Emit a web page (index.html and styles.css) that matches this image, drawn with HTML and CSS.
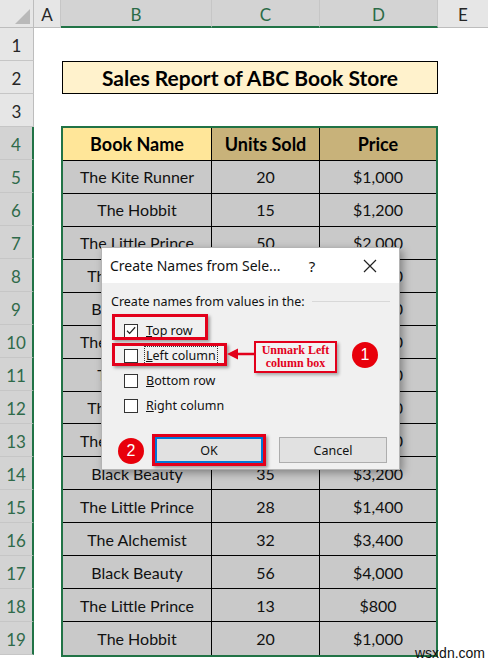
FILE: index.html
```html
<!DOCTYPE html>
<html>
<head>
<meta charset="utf-8">
<link rel="stylesheet" href="styles.css">
</head>
<body>
<div class="sheet">
  <div class="colheads">
    <div class="ch corner"><span class="tri"></span></div>
    <div class="ch ca">A</div>
    <div class="ch cb sel">B</div>
    <div class="ch cc sel">C</div>
    <div class="ch cd sel">D</div>
    <div class="ch ce">E</div>
  </div>
  <div class="body">
    <div class="rowheads">
      <div class="rh">1</div><div class="rh">2</div><div class="rh">3</div>
      <div class="rh sel">4</div><div class="rh sel">5</div><div class="rh sel">6</div>
      <div class="rh sel">7</div><div class="rh sel">8</div><div class="rh sel">9</div>
      <div class="rh sel">10</div><div class="rh sel">11</div><div class="rh sel">12</div>
      <div class="rh sel">13</div><div class="rh sel">14</div><div class="rh sel">15</div>
      <div class="rh sel">16</div><div class="rh sel">17</div><div class="rh sel">18</div>
      <div class="rh sel">19</div>
    </div>
    <div class="cells">
      <div class="title">Sales Report of ABC Book Store</div>
      <div class="tbl">
        <div class="c hd hd1">Book Name</div><div class="c hd hd2">Units Sold</div><div class="c hd hd2 last">Price</div>
        <div class="c">The Kite Runner</div><div class="c">20</div><div class="c last">$1,000</div>
        <div class="c">The Hobbit</div><div class="c">15</div><div class="c last">$1,200</div>
        <div class="c">The Little Prince</div><div class="c">50</div><div class="c last">$2,000</div>
        <div class="c">The Alchemist</div><div class="c">40</div><div class="c last">$3,000</div>
        <div class="c">Black Beauty</div><div class="c">25</div><div class="c last">$2,500</div>
        <div class="c">The Kite Runner</div><div class="c">30</div><div class="c last">$1,500</div>
        <div class="c">The Hobbit</div><div class="c">18</div><div class="c last">$1,800</div>
        <div class="c">The Alchemist</div><div class="c">22</div><div class="c last">$2,200</div>
        <div class="c">The Kite Runner</div><div class="c">45</div><div class="c last">$2,700</div>
        <div class="c">Black Beauty</div><div class="c">35</div><div class="c last">$3,200</div>
        <div class="c">The Little Prince</div><div class="c">28</div><div class="c last">$1,400</div>
        <div class="c">The Alchemist</div><div class="c">32</div><div class="c last">$3,400</div>
        <div class="c">Black Beauty</div><div class="c">56</div><div class="c last">$4,000</div>
        <div class="c">The Little Prince</div><div class="c">13</div><div class="c last">$800</div>
        <div class="c bot">The Hobbit</div><div class="c bot">20</div><div class="c last bot">$1,000</div>
      </div>
    </div>
  </div>
</div>

<div class="dlg">
  <div class="dlg-title">
    <span class="dt">Create Names from Sele...</span>
    <span class="help">?</span>
    <span class="close"><svg width="14" height="14" viewBox="0 0 14 14"><path d="M1 1 L13 13 M13 1 L1 13" stroke="#222" stroke-width="1.2" fill="none"/></svg></span>
  </div>
  <div class="dlg-body">
    <div class="group"><span>Create names from values in the:</span><span class="gline"></span></div>
    <div class="opts">
      <div class="opt"><span class="box"><svg width="13" height="13" viewBox="0 0 13 13"><path d="M2.2 6.8 L5 9.6 L11 3" stroke="#222" stroke-width="1.3" fill="none"/></svg></span><span class="lbl"><u>T</u>op row</span></div>
      <div class="opt"><span class="box"></span><span class="lbl focus"><u>L</u>eft column</span></div>
      <div class="opt"><span class="box"></span><span class="lbl"><u>B</u>ottom row</span></div>
      <div class="opt"><span class="box"></span><span class="lbl"><u>R</u>ight column</span></div>
    </div>
    <div class="btns">
      <div class="btn def">OK</div>
      <div class="btn">Cancel</div>
    </div>
  </div>
</div>

<div class="rbox rb-top"></div>
<div class="rbox rb-left"></div>
<svg class="arrow" width="30" height="16" viewBox="0 0 30 16"><path d="M30 8 H10" stroke="#E3001B" stroke-width="2.5"/><path d="M2 8 L13 2.5 L13 13.5 Z" fill="#E3001B"/></svg>
<div class="note">Unmark Left<br>column box</div>
<div class="num n1">1</div>
<div class="rbox rb-ok"></div>
<div class="num n2">2</div>
<div class="wm">wsxdn.com</div>
</body>
</html>
```
FILE: styles.css
```css
* { box-sizing: border-box; margin: 0; padding: 0; }
body {
  margin: 0;
  width: 488px;
  height: 664px;
  overflow: hidden;
  background: #fff;
  position: relative;
  font-family: Lato, "Liberation Sans", sans-serif;
  color: #000;
}
.sheet { display: flex; flex-direction: column; }
.colheads { display: flex; height: 28px; }
.ch {
  height: 28px;
  background: #E6E6E6;
  border-right: 1px solid #C6C6C6;
  border-bottom: 1px solid #BDBDBD;
  display: flex;
  align-items: center;
  justify-content: center;
  font-size: 17px;
  color: #262626;
  padding-top: 2px;
}
.ch.sel { background: #D3D3D3; color: #2B6B47; border-bottom: 2px solid #217346; }
.corner { width: 34px; position: relative; border-right: 1px solid #BDBDBD; }
.tri {
  position: absolute;
  right: 3px;
  bottom: 3px;
  width: 0; height: 0;
  border-left: 15px solid transparent;
  border-bottom: 15px solid #B9B9B9;
}
.ca { width: 27px; }
.cb { width: 151px; }
.cc { width: 108px; }
.cd { width: 118px; }
.ce { flex: 1; border-right: none; }

.body { display: flex; }
.rowheads { width: 34px; display: flex; flex-direction: column; }
.rh {
  height: 33px;
  background: #E6E6E6;
  border-bottom: 1px solid #C6C6C6;
  border-right: 1px solid #BDBDBD;
  display: flex;
  align-items: center;
  justify-content: center;
  font-size: 17px;
  color: #262626;
  padding-top: 3px;
}
.rh.sel { background: #D3D3D3; color: #2F6A4A; border-right: 2px solid #217346; }

.cells {
  flex: 1;
  display: grid;
  grid-template-columns: 27px 151px 108px 118px 1fr;
  grid-template-rows: repeat(19, 33px);
}
.title {
  grid-row: 2;
  grid-column: 2 / 5;
  margin-left: 1px;
  border: 1px solid #000;
  background: #FFF2CC;
  font-weight: 700;
  font-size: 21px;
  display: flex;
  align-items: center;
  justify-content: center;
}
.tbl {
  grid-row: 4 / 20;
  grid-column: 2 / 5;
  margin: -1px 0 -2px 0;
  border: 2px solid #217346;
  display: grid;
  grid-template-columns: 149px 108px 1fr;
  grid-template-rows: repeat(16, 1fr);
  background: #C9C9C9;
}
.c {
  border-right: 1px solid #000;
  border-bottom: 1px solid #000;
  display: flex;
  align-items: center;
  justify-content: center;
  font-size: 16px;
  color: #111;
}
.c.last { border-right: none; }
.c.bot { border-bottom: none; }
.hd { font-weight: 700; font-size: 18px; color: #000; }
.hd1 { background: #FFE699; }
.hd2 { background: #C8B27A; }

/* dialog */
.dlg {
  position: absolute;
  left: 101px;
  top: 247px;
  width: 299px;
  height: 223px;
  border: 1px solid #B4B4B4;
  background: #F0F0F0;
  box-shadow: 3px 3px 8px rgba(0,0,0,0.35);
  font-family: "Noto Sans", "Open Sans", sans-serif;
  display: flex;
  flex-direction: column;
}
.dlg-title {
  height: 35px;
  background: #fff;
  display: flex;
  align-items: center;
  padding-left: 8px;
  font-size: 14px;
  color: #111;
}
.dt { flex: 1; }
.help { width: 20px; text-align: center; margin-right: 41px; font-size: 15px; }
.close { width: 14px; height: 14px; margin-right: 22px; display: flex; }
.dlg-body { flex: 1; padding: 0 9px; font-size: 12.5px; color: #111; }
.group { display: flex; align-items: center; height: 16px; margin-top: 10px; }
.gline { flex: 1; height: 1px; background: #D8D8D8; margin-left: 7px; }
.opts { margin-top: 9px; display: flex; flex-direction: column; }
.opt { height: 25px; display: flex; align-items: center; padding-left: 13px; }
.box {
  width: 14px;
  height: 14px;
  border: 1px solid #333;
  background: #fff;
  display: flex;
  align-items: center;
  justify-content: center;
  margin-right: 7px;
}
.lbl { line-height: 17px; padding: 0 1px; }
.focus { outline: 1px dotted #333; }
.btns { display: flex; gap: 16px; margin-top: 19px; padding-left: 44px; }
.btn {
  width: 108px;
  height: 26px;
  background: #E1E1E1;
  border: 1px solid #ADADAD;
  display: flex;
  align-items: center;
  justify-content: center;
  font-size: 12.5px;
  color: #111;
}
.btn.def { border: 1px solid #0078D7; box-shadow: inset 0 0 0 1px #0078D7; }

/* annotations */
.rbox {
  position: absolute;
  border: 3px solid #E3001B;
  box-shadow: 2px 2px 3px rgba(0,0,0,0.35);
}
.rb-top { left: 112px; top: 314px; width: 96px; height: 26px; }
.rb-left { left: 112px; top: 343px; width: 115px; height: 23px; }
.rb-ok { left: 152px; top: 434px; width: 114px; height: 32px; }
.arrow { position: absolute; left: 225px; top: 346px; }
.note {
  position: absolute;
  left: 254px;
  top: 341px;
  width: 83px;
  height: 32px;
  border: 2px solid #E3001B;
  background: #F2F2F2;
  box-shadow: 2px 2px 3px rgba(0,0,0,0.3);
  font-family: "Liberation Serif", serif;
  font-weight: 700;
  font-size: 12px;
  line-height: 13px;
  color: #E3001B;
  text-align: center;
  padding-top: 1px;
}
.num {
  position: absolute;
  width: 26px;
  height: 26px;
  border-radius: 50%;
  background: #E8000B;
  color: #fff;
  font-family: "Liberation Sans", sans-serif;
  font-size: 16px;
  display: flex;
  align-items: center;
  justify-content: center;
}
.n1 { left: 352px; top: 342px; }
.n2 { left: 118px; top: 438px; }
.wm {
  position: absolute;
  left: 415px;
  top: 645px;
  font-family: "Liberation Sans", sans-serif;
  font-size: 14px;
  color: #111;
}
```
